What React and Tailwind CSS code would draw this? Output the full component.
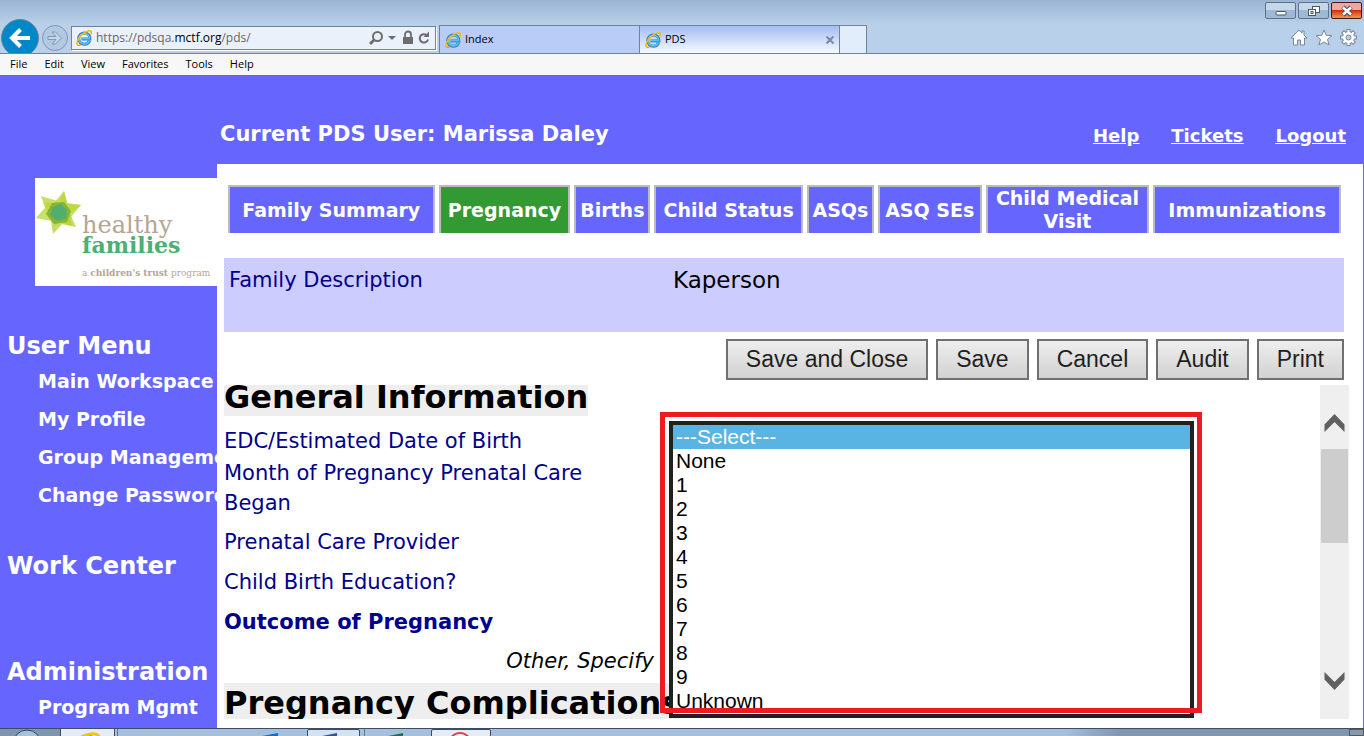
import React, { useState } from 'react';

const tabs = ['Family Summary', 'Pregnancy', 'Births', 'Child Status', 'ASQs', 'ASQ SEs', 'Child Medical Visit', 'Immunizations'];

const months = ['---Select---', 'None', '1', '2', '3', '4', '5', '6', '7', '8', '9', 'Unknown'];

const IeIcon = () => (
  <svg className="w-4 h-4 shrink-0" viewBox="0 0 16 16" fill="none">
    <path d="M13.600 10.600c-.9 2.200-2.900 3.600-5.200 3.600-3.200 0-5.700-2.500-5.700-5.600S5.200 3 8.400 3s5.500 2.300 5.500 5.900H5.500" stroke="#2a84c0" strokeWidth="3" />
    <path d="M13.400 10.600c-.9 2-2.800 3.200-5 3.200-3 0-5.300-2.300-5.300-5.200s2.300-5.200 5.300-5.200 5.200 2.100 5.200 5.200H5.500" stroke="#62bdea" strokeWidth="1.700" />
    <path d="M1.800 15.200C-.2 13.200 2 8.300 6 4.700 9.600 1.400 13.900-.1 15 1.300c.6.8.3 2.100-.5 3.500" stroke="#f5b916" strokeWidth="1.600" />
    <path d="M1.800 15.200c.8.4 2 .1 3.200-.6" stroke="#e39a10" strokeWidth="1.200" />
  </svg>
);

const NavButtons = () => (
  <div className="flex w-[71px] h-[34px] shrink-0">
    <button type="button" aria-label="Back" className="w-10 h-[34px] overflow-hidden">
      <svg className="w-10 h-[38px]" viewBox="0 0 40 38">
        <circle cx="20" cy="19" r="18.500" fill="#0087c9" stroke="#6c8196" />
        <path d="M30 19H12M20.500 10.500L12 19l8.500 8.500" fill="none" stroke="#fff" strokeWidth="4" />
      </svg>
    </button>
    <button type="button" aria-label="Forward" className="w-[31px] h-[34px]">
      <svg className="w-[31px] h-[34px]" viewBox="0 0 31 34">
        <circle cx="15" cy="19" r="12.500" fill="#b3c9e3" stroke="#8296b2" />
        <path d="M8 17.500h8l-4-4.500h3.500l6 6-6 6H12l4-4.500H8z" fill="#c4d6ea" stroke="#8296b2" />
      </svg>
    </button>
  </div>
);

const WindowControls = () => (
  <div className="flex gap-[2px] h-[19px] pt-[2px] pr-[2px] justify-end">
    <button type="button" aria-label="Minimize" className="flex items-center justify-center w-[31px] rounded-xs border border-[#5f7289] bg-linear-to-b from-[#c5d8ea] from-50% to-[#9db9d4] to-50%">
      <svg className="w-3 h-3" viewBox="0 0 12 12"><rect x="1" y="6.500" width="10" height="3.500" rx="1" fill="#fff" stroke="#4b5563" /></svg>
    </button>
    <button type="button" aria-label="Restore" className="flex items-center justify-center w-[31px] rounded-xs border border-[#5f7289] bg-linear-to-b from-[#c5d8ea] from-50% to-[#9db9d4] to-50%">
      <svg className="w-3 h-3" viewBox="0 0 12 12" fill="#fff" stroke="#4b5563">
        <rect x="4.500" y="1.500" width="7" height="6" />
        <rect x="0.500" y="4.500" width="7" height="6" />
        <rect x="3" y="6.500" width="2" height="2" fill="#9db9d4" />
      </svg>
    </button>
    <button type="button" aria-label="Close" className="flex items-center justify-center w-[31px] rounded-xs border border-[#4b1520] bg-linear-to-b from-[#f0a79d] from-45% via-[#cf2c0d] via-50% to-[#eb9a45]">
      <svg className="w-3 h-3" viewBox="0 0 12 12" fill="none">
        <path d="M2 2l8 8M10 2l-8 8" stroke="#4a4f5e" strokeWidth="4.500" />
        <path d="M2 2.500l8 7M10 2.500l-8 7" stroke="#fff" strokeWidth="2.500" />
      </svg>
    </button>
  </div>
);

const BrowserTools = () => (
  <div className="flex gap-[7px] pr-[7px] pb-[7px] ml-auto">
    <button type="button" aria-label="Home">
      <svg className="w-[18px] h-[17px]" viewBox="0 0 18 17" fill="#fff" stroke="#74879c">
        <path d="M9 1L1 9h2.500v7H7.500v-5h3v5h4V9H17l-3-3V2h-2v2z" />
      </svg>
    </button>
    <button type="button" aria-label="Favorites">
      <svg className="w-[18px] h-[17px]" viewBox="0 0 18 17" fill="#fff" stroke="#74879c">
        <path d="M9 1l2.200 5.300 5.800.4-4.500 3.700 1.500 5.600L9 13l-5 3 1.500-5.600L1 6.700l5.800-.4z" />
      </svg>
    </button>
    <button type="button" aria-label="Settings">
      <svg className="w-[17px] h-[17px]" viewBox="0 0 17 17" fill="none">
        <g stroke="#74879c" strokeWidth="4.200">
          <path d="M8.500 0v17M0 8.500h17M2.500 2.500l12 12M14.500 2.500l-12 12" />
        </g>
        <circle cx="8.500" cy="8.500" r="6.500" fill="#74879c" />
        <g stroke="#fff" strokeWidth="2.200">
          <path d="M8.500 1v15M1 8.500h15M3.200 3.200l10.600 10.600M13.800 3.200L3.200 13.800" />
        </g>
        <circle cx="8.500" cy="8.500" r="5.500" fill="#fff" />
        <circle cx="8.500" cy="8.500" r="2.500" fill="#b8cfe9" stroke="#74879c" />
      </svg>
    </button>
  </div>
);

const BrowserChrome = () => (
  <div className="shrink-0 font-['Open_Sans',sans-serif] text-[11px] text-black">
    <div className="h-[54px] bg-linear-to-b from-[#9ab4d1] to-[#b9d0ea] to-45% border-b border-[#71829b]">
      <WindowControls />
      <div className="flex items-end h-[34px]">
        <NavButtons />
        <div className="flex items-center w-[365px] h-6 mb-[3px] px-1 gap-1 border border-[#71829b] bg-[#eaf1fb] shadow-[1px_1px_0_#fff]">
          <IeIcon />
          <div className="flex-1 text-xs text-[#666]">
            https://pdsqa.<span className="text-black">mctf.org</span>/pds/
          </div>
          <svg className="w-[62px] h-4" viewBox="0 0 62 16" fill="none" stroke="#6d6d6d">
            <circle cx="8.500" cy="6.500" r="4.500" strokeWidth="2" />
            <path d="M5.500 9.500l-4.500 4.500" strokeWidth="2.800" />
            <path d="M19 6h8l-4 4z" fill="#6d6d6d" stroke="none" />
            <path d="M34 7h10v7H34z" fill="#6d6d6d" stroke="none" />
            <path d="M36 7V4.500a3 3 0 016 0V7" strokeWidth="1.800" />
            <path d="M57.500 5A4.200 4.200 0 1059 9.500" strokeWidth="2" />
            <path d="M60 1.500v5.500h-5.500z" fill="#6d6d6d" stroke="none" />
          </svg>
        </div>
        <div className="flex h-7 ml-[3px] border border-b-0 border-[#71829b]">
          <button type="button" className="flex items-center gap-1 w-[199px] px-[5px] bg-[#b9ccf7]">
            <IeIcon />
            Index
          </button>
          <button type="button" className="flex items-center gap-1 w-[201px] px-[5px] border-x border-[#71829b] bg-linear-to-b from-[#a3bcf2] to-[#f7fafe]">
            <IeIcon />
            PDS
            <svg className="w-2 h-2 ml-auto" viewBox="0 0 8 8"><path d="M.5.5l7 7M7.500.5l-7 7" stroke="#8088a0" strokeWidth="2" /></svg>
          </button>
          <button type="button" aria-label="New tab" className="w-[26px] bg-[#e1edfa]" />
        </div>
        <BrowserTools />
      </div>
    </div>
    <div className="flex items-center gap-[17px] h-[22px] px-[10px] bg-[#f7f7f7] border-b border-[#6f6f78]">
      {['File', 'Edit', 'View', 'Favorites', 'Tools', 'Help'].map(item => (
        <button key={item} type="button">{item}</button>
      ))}
    </div>
  </div>
);

const Logo = () => (
  <div className="flex h-[108px] ml-[35px] mt-[14px] bg-white font-['DejaVu_Serif',serif] text-[#b5a595]">
    <svg className="w-[47px] h-[47px] mt-3 shrink-0" viewBox="0 0 47 47">
      <path d="M29 1l8 35-22-7zM46 15L20 36 8 12z" fill="#c6dc4e" />
      <path d="M29 1L13 20l16 12 6-10zM46 15L26 12l-8 15 14 5z" fill="#bcd843" opacity=".8" />
      <path d="M41 37L17 32l7-19 8 4zM18 44l-4-25 19 3-2 8z" fill="#b4d43c" opacity=".8" />
      <path d="M1 28l14-16 15 6-8 14zM6 6l23 7 1 17-16-1z" fill="#b9d842" opacity=".8" />
      <path d="M17 13l12-1 7 9-4 11-13 2-8-10z" fill="#86b534" />
      <path d="M18 17l8-3 6 6-1 8-8 3-8-6z" fill="#51ad70" />
    </svg>
    <div className="pt-[35px] whitespace-nowrap">
      <div className="text-2xl leading-6">healthy</div>
      <div className="text-[22px] leading-4 font-bold text-[#4caf73]">families</div>
      <div className="mt-1 text-[9px] leading-8">a <b>children&apos;s trust</b> program</div>
    </div>
  </div>
);

const MenuHeading = ({ children }) => (
  <h2 className="pl-[7px] text-[24px] leading-8 font-bold">{children}</h2>
);

const MenuLink = ({ children }) => (
  <a href="#" className="block pl-[38px] text-[19px] leading-[38px] font-bold">{children}</a>
);

const Sidebar = () => (
  <nav className="w-[217px] shrink-0 overflow-hidden whitespace-nowrap text-white">
    <Logo />
    <div className="mt-11">
      <MenuHeading>User Menu</MenuHeading>
      <MenuLink>Main Workspace</MenuLink>
      <MenuLink>My Profile</MenuLink>
      <MenuLink>Group Management</MenuLink>
      <MenuLink>Change Password</MenuLink>
    </div>
    <div className="mt-9">
      <MenuHeading>Work Center</MenuHeading>
    </div>
    <div className="mt-[74px]">
      <MenuHeading>Administration</MenuHeading>
      <MenuLink>Program Mgmt</MenuLink>
    </div>
  </nav>
);

const ActionButton = ({ children }) => (
  <button type="button" className="h-[41px] px-[18px] border-2 border-[#707070] bg-linear-to-b from-[#eee] to-[#d2d2d2] font-['Liberation_Sans',sans-serif] text-[23px] text-[#1f1f1f]">
    {children}
  </button>
);

const PregnancyForm = () => {
  const [month, setMonth] = useState('---Select---');

  return (
    <div className="relative flex flex-1 min-h-0 mt-[5px] mb-[9px] mr-[14px]">
      <div className="flex-1 overflow-hidden text-[21px] leading-[30px] text-[#00008b]">
        <h1 className="w-fit h-[31px] bg-[#eee] text-[32px] leading-6 font-bold text-black">General Information</h1>
        <div className="mt-[10px]">EDC/Estimated Date of Birth</div>
        <label htmlFor="month" className="block w-[400px] mt-[2px]">Month of Pregnancy Prenatal Care Began</label>
        <div className="mt-[9px]">Prenatal Care Provider</div>
        <div className="mt-[10px]">Child Birth Education?</div>
        <div className="mt-[10px] font-bold">Outcome of Pregnancy</div>
        <div className="w-[430px] mt-[9px] text-right italic text-black">Other, Specify</div>
        <h1 className="w-fit h-10 mt-[7px] bg-[#eee] text-[32px] leading-10 font-bold text-black">Pregnancy Complications</h1>
      </div>

      {/* scrollbar */}
      <div className="flex flex-col w-[29px] pt-7 pb-7 bg-[#efefef]">
        <svg className="w-[29px] h-5" viewBox="0 0 29 20"><path d="M4.500 19v-7.500L14.500 1l10 10.500V19l-10-10z" fill="#606060" /></svg>
        <div className="h-[94px] mt-4 mx-px bg-[#cdcdcd]" />
        <svg className="w-[29px] h-5 mt-auto" viewBox="0 0 29 20"><path d="M4.500 1v7.500L14.500 19l10-10.500V1l-10 10z" fill="#606060" /></svg>
      </div>

      {/* open month list */}
      <select
        id="month"
        size={12}
        value={month}
        onChange={(e) => setMonth(e.target.value)}
        className="absolute left-[445px] top-9 w-[525px] h-[297px] overflow-hidden border-4 border-[#202020] bg-white font-['Liberation_Sans',sans-serif] text-[21px] text-black"
      >
        {months.map(m => (
          <option key={m} value={m} className="h-6 min-h-6 p-0 pl-[3px] leading-6 checked:bg-linear-to-b checked:from-[#5ab4e3] checked:to-[#5ab4e3] checked:text-white">{m}</option>
        ))}
      </select>
      <div className="absolute left-[436px] top-[27px] w-[542px] h-[301px] border-5 border-[#ed1c24] pointer-events-none" />
    </div>
  );
};

const Taskbar = () => (
  <div className="flex shrink-0 h-2 overflow-hidden border-t border-[#3d4c60] bg-linear-to-r from-[#a5c0dd] from-78% to-[#8296b0] to-82%">
    <div className="w-[60px] bg-[#8094ae]">
      <svg className="w-[60px] h-7" viewBox="0 0 60 28"><circle cx="27" cy="15" r="14" fill="#a7c2d8" stroke="#27486e" /></svg>
    </div>
    <div className="w-[55px] border-x border-[#3d4c60] bg-[#e4edf6]">
      <svg className="w-[53px] h-7" viewBox="0 0 53 28" fill="none">
        <circle cx="26" cy="16" r="9" stroke="#4eaede" strokeWidth="4" />
        <path d="M16 12c8-8 20-10 23-3" stroke="#f5c21b" strokeWidth="3" />
      </svg>
    </div>
    <div className="w-[3px] border-r border-[#65778e]" />
    <svg className="w-[189px] h-7" viewBox="0 0 189 28">
      <path d="M20 6h14v4H20z" fill="#d1bd79" />
      <path d="M139 8l21-4v24h-21z" fill="#0d72c4" />
    </svg>
    <div className="w-[53px] h-8 shrink-0 rounded-t-xs border border-[#3d4c60] bg-[#d5e2f0]">
      <svg className="w-[51px] h-7" viewBox="0 0 51 28"><path d="M9 7l20-4v24H9z" fill="#2b579a" /></svg>
    </div>
    <div className="w-[5px] border-r border-[#65778e]" />
    <svg className="w-[66px] h-7" viewBox="0 0 66 28"><path d="M18 8l20-4v24H18z" fill="#217346" /></svg>
    <div className="w-[60px] h-8 shrink-0 rounded-t-xs border border-[#3d4c60] bg-[#e4edf6]">
      <svg className="w-[58px] h-7" viewBox="0 0 58 28"><circle cx="28" cy="14" r="11" fill="#fff" stroke="#e04848" strokeWidth="2" /></svg>
    </div>
    <div className="w-[15px] ml-auto border border-[#4c5a6b] bg-[#8d98a6]" />
  </div>
);

export default function App() {
  const [activeTab, setActiveTab] = useState('Pregnancy');

  return (
    <div className="flex flex-col h-screen overflow-hidden bg-[#6666ff] font-['DejaVu_Sans',sans-serif]">
      <BrowserChrome />

      <header className="flex items-center justify-between shrink-0 h-[88px] pl-[220px] pr-[18px] pt-[30px] text-white font-bold">
        <div className="text-[21px]">Current PDS User: Marissa Daley</div>
        <div className="flex gap-8 text-[18px] underline">
          <a href="#">Help</a>
          <a href="#">Tickets</a>
          <a href="#">Logout</a>
        </div>
      </header>

      <div className="flex flex-1 min-h-0">
        <Sidebar />
        <main className="flex flex-col flex-1 min-w-0 mr-px pl-[7px] bg-white">
          <div className="grid grid-cols-[207fr_132fr_76fr_149fr_67fr_104fr_164fr_188fr] gap-1 h-12 mt-[21px] ml-1 mr-[22px]">
            {tabs.map(tab => (
              <button
                key={tab}
                type="button"
                onClick={() => setActiveTab(tab)}
                className={`min-w-0 border-2 border-b-0 border-[#bbb] text-[19px] leading-[23px] font-bold text-white ${
                  tab === activeTab ? 'bg-[#339933]' : 'bg-[#6666ff]'
                }`}
              >
                {tab}
              </button>
            ))}
          </div>

          <div className="flex h-[74px] mt-[25px] mr-[19px] pl-[5px] pt-[7px] bg-[#ccccff] leading-[30px]">
            <div className="w-[444px] text-[21px] text-[#00008b]">Family Description</div>
            <div className="text-[23px]">Kaperson</div>
          </div>

          <div className="flex justify-end gap-2 mt-[7px] mr-[19px]">
            <ActionButton>Save and Close</ActionButton>
            <ActionButton>Save</ActionButton>
            <ActionButton>Cancel</ActionButton>
            <ActionButton>Audit</ActionButton>
            <ActionButton>Print</ActionButton>
          </div>

          <PregnancyForm />
        </main>
      </div>

      <Taskbar />
    </div>
  );
}
